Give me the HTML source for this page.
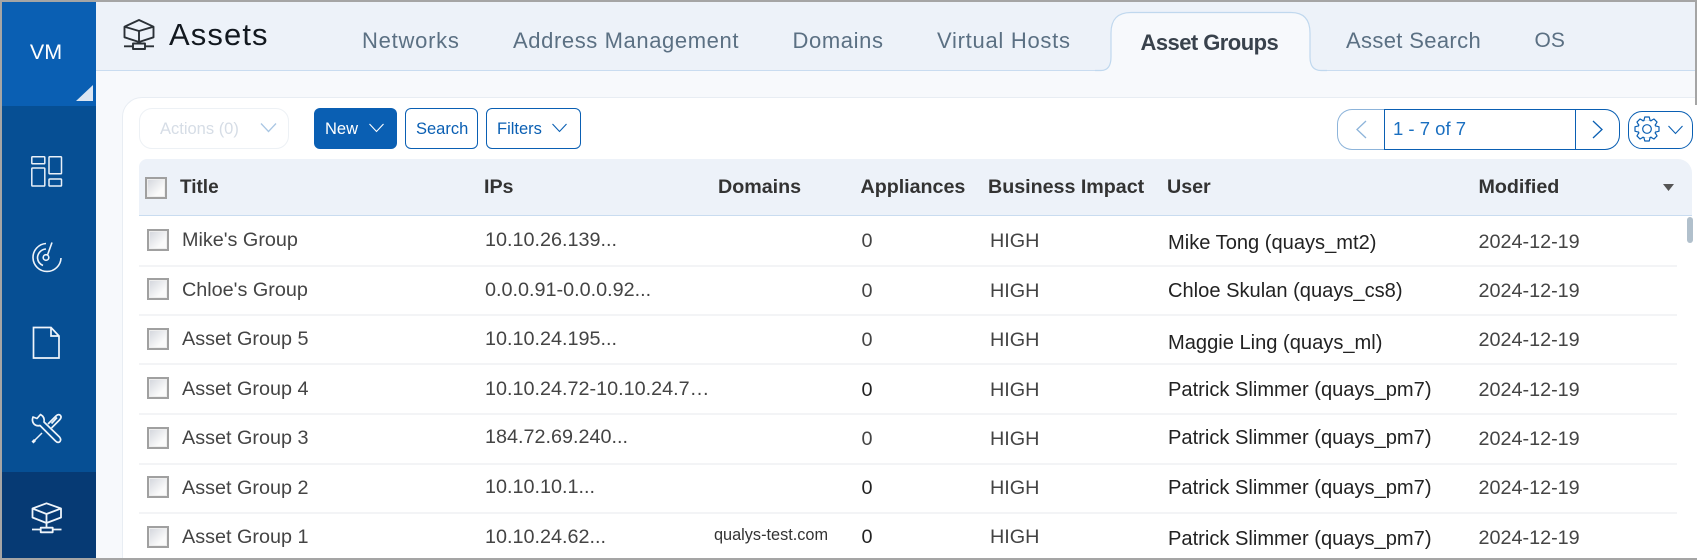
<!DOCTYPE html>
<html><head><meta charset="utf-8"><style>
html,body{margin:0;padding:0}
#p{position:relative;width:1697px;height:560px;overflow:hidden;background:#f7f9fc;font-family:"Liberation Sans",sans-serif}
#p div{position:absolute;white-space:nowrap}
.tab{font-size:22px;color:#5b7083;top:27px;line-height:28px}
.h{font-size:19.700px;font-weight:bold;color:#333;top:176px;line-height:22px;letter-spacing:-.02px}
.c{font-size:19.800px;color:#444;line-height:22px}
.u{font-size:20.100px;color:#222;left:1168px;line-height:22px}
.cb{width:18px;height:18px;border:2px solid #a0a0a0;background:linear-gradient(135deg,#d2d5dc,#fafafa 70%);box-shadow:inset 0 0 0 1px #eee}
.sep{left:139px;width:1538px;height:2px;background:#f3f4f6}
.t{top:118.500px;font-size:16.500px;line-height:20px}
svg{position:absolute;overflow:visible}
</style></head><body><div id="p">

<div style="left:0;top:0;width:1697px;height:70px;background:#edf2f9;border-bottom:1.500px solid #c9dcf0"></div>

<!-- Assets title -->
<svg style="left:122px;top:18px" width="34" height="34" viewBox="0 0 34 34" fill="none" stroke="#2b3137" stroke-width="1.900" stroke-linejoin="round"><path d="M17 2 L31.500 8.700 V19.300 L17 24 L2.500 19.300 V8.700 Z M2.500 8.700 L17 13 L31.500 8.700 M17 13 V25.500"/><rect x="11" y="25.500" width="12" height="5.500"/><path d="M2 28.300 H11 M23 28.300 H32"/></svg>
<div style="left:169px;top:16px;font-size:31px;line-height:38px;color:#12181f;letter-spacing:1.100px">Assets</div>

<!-- Tabs -->
<div class="tab" style="left:362px;letter-spacing:.75px">Networks</div>
<div class="tab" style="left:513px;letter-spacing:.6px">Address Management</div>
<div class="tab" style="left:792.500px;letter-spacing:.62px">Domains</div>
<div class="tab" style="left:937px;letter-spacing:.72px">Virtual Hosts</div>
<svg style="left:1095px;top:11px" width="232" height="61" viewBox="0 0 232 61"><path d="M0 59.500 H6 Q16 59.500 16 46 V22 Q16 1.500 36 1.500 H196 Q215 1.500 215 22 V46 Q215 59.500 226 59.500 H232 V61 H0 Z" fill="#f7f9fc"/><path d="M0 59.500 H6 Q16 59.500 16 46 V22 Q16 1.500 36 1.500 H196 Q215 1.500 215 22 V46 Q215 59.500 226 59.500 H232" fill="none" stroke="#c0d8ee" stroke-width="1.200"/></svg>
<div class="tab" style="left:1140.500px;top:29px;font-weight:bold;color:#39424c;font-size:22px;letter-spacing:-.55px">Asset Groups</div>
<div class="tab" style="left:1346px;letter-spacing:.35px">Asset Search</div>
<div class="tab" style="left:1534.500px;font-size:21px">OS</div>

<!-- Sidebar -->
<div style="left:0;top:0;width:96px;height:560px;background:#064f94"></div>
<div style="left:0;top:0;width:96px;height:106px;background:#0a5fb3"></div>
<div style="left:0;top:472px;width:96px;height:88px;background:#063a74"></div>
<div style="left:0;top:39px;font-size:21.500px;line-height:26px;color:#fff;width:92px;text-align:center">VM</div>
<svg style="left:76px;top:85px" width="17" height="16"><path d="M0 16 L17 0 V16 Z" fill="#dce6f2"/></svg>
<svg style="left:31px;top:156px" width="32" height="32" fill="none" stroke="#e9f0f8" stroke-width="1.500"><rect x=".8" y=".8" width="13" height="7" rx=".8"/><rect x=".8" y="12" width="13" height="18" rx=".8"/><rect x="18" y=".8" width="12.500" height="17" rx=".8"/><rect x="18" y="23" width="12.500" height="7" rx=".8"/></svg>
<svg style="left:31px;top:241px" width="32" height="32" fill="none" stroke="#eef4fa" stroke-width="1.600"><path d="M15 2.500 A14 14 0 1 0 30 17"/><path d="M15 8 A9 9 0 0 0 6.500 17 A9 9 0 0 0 12 24.500"/><circle cx="15" cy="16.500" r="2.800"/><path d="M16.500 14 L21 1.500"/></svg>
<svg style="left:32px;top:326px" width="30" height="34" fill="none" stroke="#f0f5fb" stroke-width="1.700"><path d="M1.500 1.500 H19 L27 10 V32 H1.500 Z M19 1.500 V10 H27"/></svg>
<svg style="left:31px;top:413px" width="32" height="32" fill="none" stroke="#eef4fa" stroke-width="1.700" stroke-linejoin="round"><path d="M9.500 1.500 L6 5.500 L2 4 Q.5 8 3 11 Q5.500 13.500 9 12.500 L24.500 28 Q27 30.500 29 28.500 Q30.500 26.500 28.500 24 L13 9 Q14 4 9.500 1.500 Z"/><path d="M17 11 L25 3 Q27.500 .5 29.500 2.500 Q31 4.500 28.500 7 L20.500 15 M26 4.500 L20.500 10.500"/><path d="M11 20 L3 28" stroke-width="1.500"/><path d="M1.500 29.500 L4 27" stroke-width="2.800"/></svg>
<svg style="left:30px;top:501px" width="34" height="34" viewBox="0 0 34 34" fill="none" stroke="#eef4fa" stroke-width="1.800" stroke-linejoin="round"><path d="M16.500 2.300 L31 7.500 V16.500 L16.500 22 L2.500 16.500 V7.500 Z M2.500 7.500 L16.500 13 L31 7.500 M16.500 13 V26.700"/><rect x="10.700" y="26.700" width="12" height="4.600"/><path d="M2 28.500 H10.700 M22.700 28.500 H31.500"/></svg>

<!-- Card -->
<div style="left:122px;top:97px;width:1590px;height:470px;background:#fff;border:1.500px solid #e8edf3;border-radius:20px 0 0 0;box-sizing:border-box"></div>

<!-- Toolbar -->
<div style="left:139px;top:108px;width:150px;height:41px;box-sizing:border-box;border:1.200px solid #edf1f5;border-radius:13px"></div>
<div class="t" style="left:160px;color:#d6dde6">Actions (0)</div>
<svg style="left:260px;top:122px" width="18" height="12" fill="none" stroke="#a9c6e3" stroke-width="1.300"><path d="M1 1.500 L8.500 9.500 L16 1.500"/></svg>

<div style="left:314px;top:108px;width:83px;height:41px;background:#0a5fb3;border-radius:6px"></div>
<div class="t" style="left:325px;color:#fff">New</div>
<svg style="left:368px;top:122px" width="18" height="12" fill="none" stroke="#fff" stroke-width="1.100"><path d="M1.500 2 L8.500 9.500 L15.500 2"/></svg>

<div style="left:405px;top:108px;width:73px;height:41px;box-sizing:border-box;border:1.200px solid #0a5fb3;border-radius:6px"></div>
<div class="t" style="left:416px;color:#0a5fb3">Search</div>

<div style="left:486px;top:108px;width:95px;height:41px;box-sizing:border-box;border:1.200px solid #0a5fb3;border-radius:6px"></div>
<div class="t" style="left:497px;color:#0a5fb3">Filters</div>
<svg style="left:551px;top:122px" width="18" height="12" fill="none" stroke="#0a5fb3" stroke-width="1.100"><path d="M1.500 2 L8.500 9.500 L15.500 2"/></svg>

<!-- Pager -->
<div style="left:1337px;top:109px;width:60px;height:41px;box-sizing:border-box;border:1.200px solid #8db4da;border-right:0;border-radius:15px 0 0 15px"></div>
<div style="left:1384px;top:109px;width:192px;height:41px;box-sizing:border-box;border:1.500px solid #0a5fb3"></div>
<div style="left:1575px;top:109px;width:45px;height:41px;box-sizing:border-box;border:1.500px solid #0a5fb3;border-left:0;border-radius:0 15px 15px 0"></div>
<div style="left:1393px;top:118px;font-size:18.500px;line-height:22px;color:#1a6fc0">1 - 7 of 7</div>
<svg style="left:1355px;top:120px" width="14" height="19" fill="none" stroke="#8db4da" stroke-width="1.300"><path d="M11 1 L2 9.500 L11 18"/></svg>
<svg style="left:1591px;top:120px" width="14" height="19" fill="none" stroke="#0a5fb3" stroke-width="1.300"><path d="M2 1 L11 9.500 L2 18"/></svg>

<div style="left:1628px;top:111px;width:65px;height:38px;box-sizing:border-box;border:1.300px solid #0a5fb3;border-radius:14px"></div>
<svg style="left:1634px;top:116px" width="26" height="26" viewBox="0 0 26 26" fill="none" stroke="#0a5fb3" stroke-width="1.200" stroke-linejoin="round">
<circle cx="13" cy="13" r="9"/><circle cx="13" cy="13" r="4.300"/>
<g fill="#fff"><path d="M9.800 4.800 L10.800 1 H15.200 L16.200 4.800"/><path d="M9.800 4.800 L10.800 1 H15.200 L16.200 4.800" transform="rotate(45 13 13)"/><path d="M9.800 4.800 L10.800 1 H15.200 L16.200 4.800" transform="rotate(90 13 13)"/><path d="M9.800 4.800 L10.800 1 H15.200 L16.200 4.800" transform="rotate(135 13 13)"/><path d="M9.800 4.800 L10.800 1 H15.200 L16.200 4.800" transform="rotate(180 13 13)"/><path d="M9.800 4.800 L10.800 1 H15.200 L16.200 4.800" transform="rotate(225 13 13)"/><path d="M9.800 4.800 L10.800 1 H15.200 L16.200 4.800" transform="rotate(270 13 13)"/><path d="M9.800 4.800 L10.800 1 H15.200 L16.200 4.800" transform="rotate(315 13 13)"/></g></svg>
<svg style="left:1667px;top:124px" width="18" height="12" fill="none" stroke="#0a5fb3" stroke-width="1.100"><path d="M1.500 2 L8.500 9.500 L15.500 2"/></svg>

<!-- Table header -->
<div style="left:139px;top:159px;width:1553px;height:56px;background:#edf2f9;border-bottom:1.500px solid #c9dcf0;border-radius:8px 14px 0 0"></div>
<div class="cb" style="left:145px;top:176.500px"></div>
<div class="h" style="left:180px;font-size:19px;top:176.500px">Title</div>
<div class="h" style="left:484px">IPs</div>
<div class="h" style="left:718px">Domains</div>
<div class="h" style="left:860.500px">Appliances</div>
<div class="h" style="left:988px">Business Impact</div>
<div class="h" style="left:1167px">User</div>
<div class="h" style="left:1478.500px">Modified</div>
<svg style="left:1663px;top:184px" width="12" height="8"><path d="M0 0 H11 L5.500 7 Z" fill="#555"/></svg>

<!-- Rows -->
<div class="sep" style="top:265px"></div><div class="sep" style="top:314px"></div><div class="sep" style="top:363px"></div><div class="sep" style="top:413px"></div><div class="sep" style="top:463px"></div><div class="sep" style="top:512px"></div>
<div style="left:1687px;top:217px;width:6px;height:26px;background:#b1c0cc;border-radius:3px"></div>

<div class="cb" style="left:147px;top:229px"></div><div class="c" style="left:182px;top:229px">Mike's Group</div><div class="c" style="left:485px;top:229px">10.10.26.139...</div><div class="c" style="left:861.500px;top:230px">0</div><div class="c" style="left:990px;top:230px">HIGH</div><div class="u" style="top:232px">Mike Tong (quays_mt2)</div><div class="c" style="left:1478.500px;top:231px">2024-12-19</div>

<div class="cb" style="left:147px;top:278px"></div><div class="c" style="left:182px;top:279px">Chloe's Group</div><div class="c" style="left:485px;top:279px">0.0.0.91-0.0.0.92...</div><div class="c" style="left:861.500px;top:280px">0</div><div class="c" style="left:990px;top:280px">HIGH</div><div class="u" style="top:280px">Chloe Skulan (quays_cs8)</div><div class="c" style="left:1478.500px;top:280px">2024-12-19</div>

<div class="cb" style="left:147px;top:328px"></div><div class="c" style="left:182px;top:328px">Asset Group 5</div><div class="c" style="left:485px;top:328px">10.10.24.195...</div><div class="c" style="left:861.500px;top:329px">0</div><div class="c" style="left:990px;top:329px">HIGH</div><div class="u" style="top:332px">Maggie Ling (quays_ml)</div><div class="c" style="left:1478.500px;top:329px">2024-12-19</div>

<div class="cb" style="left:147px;top:377px"></div><div class="c" style="left:182px;top:378px">Asset Group 4</div><div class="c" style="left:485px;top:378px">10.10.24.72-10.10.24.7…</div><div class="c" style="left:861.500px;top:379px;color:#222">0</div><div class="c" style="left:990px;top:379px">HIGH</div><div class="u" style="top:379px">Patrick Slimmer (quays_pm7)</div><div class="c" style="left:1478.500px;top:379px">2024-12-19</div>

<div class="cb" style="left:147px;top:427px"></div><div class="c" style="left:182px;top:427px">Asset Group 3</div><div class="c" style="left:485px;top:426px">184.72.69.240...</div><div class="c" style="left:861.500px;top:428px">0</div><div class="c" style="left:990px;top:428px">HIGH</div><div class="u" style="top:427px">Patrick Slimmer (quays_pm7)</div><div class="c" style="left:1478.500px;top:428px">2024-12-19</div>

<div class="cb" style="left:147px;top:476px"></div><div class="c" style="left:182px;top:477px">Asset Group 2</div><div class="c" style="left:485px;top:476px">10.10.10.1...</div><div class="c" style="left:861.500px;top:477px;color:#222">0</div><div class="c" style="left:990px;top:477px">HIGH</div><div class="u" style="top:477px">Patrick Slimmer (quays_pm7)</div><div class="c" style="left:1478.500px;top:477px">2024-12-19</div>

<div class="cb" style="left:147px;top:526px"></div><div class="c" style="left:182px;top:526px">Asset Group 1</div><div class="c" style="left:485px;top:526px">10.10.24.62...</div><div class="c" style="left:714px;top:524px;font-size:16.300px;color:#333">qualys-test.com</div><div class="c" style="left:861.500px;top:526px;color:#222">0</div><div class="c" style="left:990px;top:526px">HIGH</div><div class="u" style="top:528px">Patrick Slimmer (quays_pm7)</div><div class="c" style="left:1478.500px;top:527px">2024-12-19</div>

<!-- Outer frame -->
<div style="left:0;top:0;width:1697px;height:2px;background:#a5a5a5"></div>
<div style="left:0;top:0;width:2px;height:560px;background:#a5a5a5"></div>
<div style="left:0;top:558px;width:1697px;height:2px;background:#a5a5a5"></div>
<div style="left:1695px;top:0;width:2px;height:105px;background:#a5a5a5"></div>
</div></body></html>
